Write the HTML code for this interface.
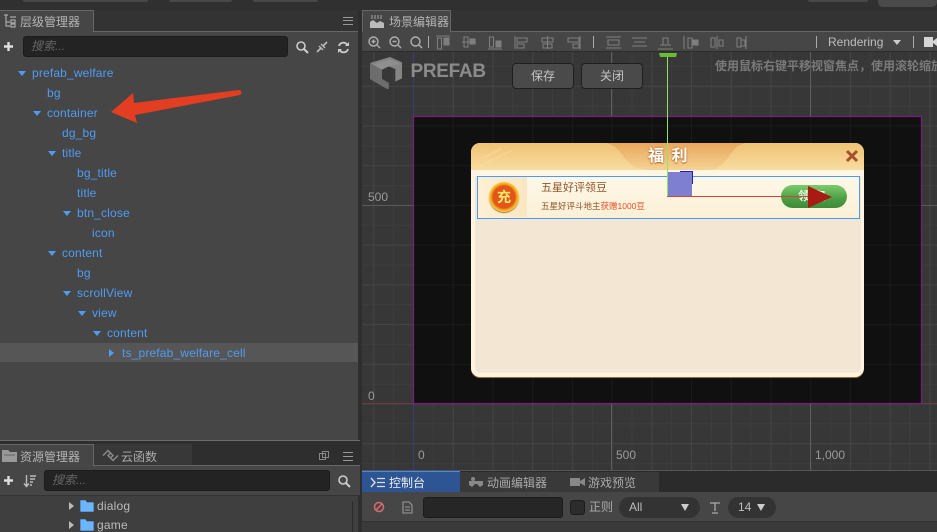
<!DOCTYPE html>
<html lang="zh"><head><meta charset="utf-8"><style>
html,body{margin:0;padding:0;width:937px;height:532px;overflow:hidden;background:#2e2e2e}
body{position:relative;font-family:"Liberation Sans","Noto Sans CJK SC",sans-serif;font-size:12px;color:#ccc}
div,span,svg{position:absolute;box-sizing:border-box}
.t{white-space:nowrap;line-height:20px;height:20px}
.r{color:#4f9cf2;white-space:nowrap;line-height:20px;height:20px;font-size:12px;letter-spacing:.16px}
.a{width:0;height:0;border-left:4px solid transparent;border-right:4px solid transparent;border-top:5px solid #4f9cf2}
.ar{width:0;height:0;border-top:4px solid transparent;border-bottom:4px solid transparent;border-left:5px solid #4f9cf2}
.s{width:1px;height:12px;top:36px;background:#aaa}
.btn{top:63px;height:26px;width:62px;background:#4a4a4a;border:1px solid #1f1f1f;border-radius:4px;color:#c4c4c4;text-align:center;line-height:24px}
.in{background:#232323;border:1px solid #1c1c1c;border-radius:3px;color:#666;font-style:italic;padding-left:7px;line-height:19px}
</style></head><body>
<!-- top bar -->
<div style="left:0;top:0;width:937px;height:10px;background:#303030"></div>
<div style="left:23px;top:0;width:125px;height:2px;background:#484848;border-radius:0 0 5px 5px"></div>
<div style="left:169px;top:0;width:63px;height:2px;background:#484848;border-radius:0 0 5px 5px"></div>
<div style="left:253px;top:0;width:65px;height:2px;background:#484848;border-radius:0 0 5px 5px"></div>
<div style="left:808px;top:0;width:60px;height:2px;background:#484848;border-radius:0 0 5px 5px"></div>
<div style="left:878px;top:0;width:59px;height:7px;background:#4a4a4a;border-radius:0 0 5px 5px"></div>

<!-- left hierarchy -->
<div style="left:0;top:10px;width:360px;height:21px;background:#333"></div>
<div style="left:0;top:10px;width:94px;height:22px;background:#464646;border:1px solid #666;border-bottom:0;border-left:0"></div>
<div style="left:94px;top:31px;width:266px;height:1px;background:#666"></div>
<div style="left:0;top:32px;width:358px;height:408px;background:#464646"></div>
<div style="left:358px;top:10px;width:4px;height:462px;background:#2e2e2e"></div>
<div style="left:0;top:440px;width:360px;height:1px;background:#6a6a6a"></div>
<svg style="left:3px;top:14px" width="14" height="14" viewBox="0 0 14 14"><path d="M1 1H5M3 1V5M7 3H13M3 5V12H7M3 8H7M8 6H12V9H8ZM8 10H12V13H8Z" fill="none" stroke="#a8a8a8" stroke-width="1.2"/></svg>
<div class="t" style="left:20px;top:12px;color:#b4b4b4">层级管理器</div>
<div style="left:343px;top:17px;width:10px;height:8px;border-top:1px solid #999;border-bottom:1px solid #999"></div>
<div style="left:343px;top:20px;width:10px;height:2px;border-top:1px solid #999"></div>
<svg style="left:3px;top:41px" width="11" height="11"><path d="M5.5 1V10M1 5.5H10" stroke="#ddd" stroke-width="2.4"/></svg>
<div class="in" style="left:23px;top:36px;width:265px;height:21px">搜索...</div>
<svg style="left:295px;top:40px" width="14" height="14"><circle cx="6" cy="6" r="4" fill="none" stroke="#ccc" stroke-width="1.6"/><path d="M9 9L13 13" stroke="#ccc" stroke-width="2"/></svg>
<svg style="left:316px;top:41px" width="12" height="12"><path d="M1 11L5 7M11 1L7 5" stroke="#bbb" stroke-width="1.6"/><path d="M3 5L7 9M5 3L9 7" stroke="#bbb" stroke-width="1.4"/></svg>
<svg style="left:337px;top:41px" width="13" height="13" viewBox="0 0 13 13"><path d="M2 5A4.5 4.5 0 0 1 10 3.5M11 8A4.5 4.5 0 0 1 3 9.5" fill="none" stroke="#ccc" stroke-width="1.8"/><path d="M12 1V5H8ZM1 12V8H5Z" fill="#ccc"/></svg>

<div style="left:0;top:343px;width:358px;height:19px;background:#565656"></div>
<div class="a" style="left:18px;top:71px"></div><div class="r" style="left:32px;top:63px">prefab_welfare</div>
<div class="r" style="left:47px;top:83px">bg</div>
<div class="a" style="left:33px;top:111px"></div><div class="r" style="left:47px;top:103px">container</div>
<div class="r" style="left:62px;top:123px">dg_bg</div>
<div class="a" style="left:48px;top:151px"></div><div class="r" style="left:62px;top:143px">title</div>
<div class="r" style="left:77px;top:163px">bg_title</div>
<div class="r" style="left:77px;top:183px">title</div>
<div class="a" style="left:63px;top:211px"></div><div class="r" style="left:77px;top:203px">btn_close</div>
<div class="r" style="left:92px;top:223px">icon</div>
<div class="a" style="left:48px;top:251px"></div><div class="r" style="left:62px;top:243px">content</div>
<div class="r" style="left:77px;top:263px">bg</div>
<div class="a" style="left:63px;top:291px"></div><div class="r" style="left:77px;top:283px">scrollView</div>
<div class="a" style="left:78px;top:311px"></div><div class="r" style="left:92px;top:303px">view</div>
<div class="a" style="left:93px;top:331px"></div><div class="r" style="left:107px;top:323px">content</div>
<div class="ar" style="left:109px;top:349px"></div><div class="r" style="left:122px;top:343px">ts_prefab_welfare_cell</div>
<svg style="left:105px;top:85px" width="140" height="42"><path d="M6 27L28 8L29 18L134 5C137 5 137 9 135 10L30 30L32 38Z" fill="#e33d22"/></svg>

<!-- assets -->
<div style="left:0;top:441px;width:360px;height:26px;background:#2e2e2e"></div>
<div style="left:93px;top:444px;width:99px;height:22px;background:#383838"></div>
<div style="left:0;top:444px;width:94px;height:23px;background:#464646;border-top:1px solid #666;border-right:1px solid #666"></div>
<div style="left:94px;top:465px;width:266px;height:1px;background:#666"></div>
<div style="left:0;top:466px;width:360px;height:29px;background:#464646"></div>
<div style="left:0;top:495px;width:358px;height:37px;background:#3f3f3f;border-top:1px solid #333"></div>
<svg style="left:2px;top:449px" width="16" height="13"><path d="M0 1H6L8 3H15V13H0Z" fill="#999"/><path d="M2 6H13" stroke="#666"/></svg>
<div class="t" style="left:20px;top:447px;color:#b4b4b4">资源管理器</div>
<svg style="left:102px;top:449px" width="17" height="13"><path d="M1 6.5L6 1.5L11 6.5L8 9.5M16 6.5L11 11.5L6 6.5L9 3.5" fill="none" stroke="#888" stroke-width="1.5"/></svg>
<div class="t" style="left:121px;top:447px;color:#aaa">云函数</div>
<div style="left:319px;top:453px;width:7px;height:7px;border:1px solid #888"></div>
<div style="left:322px;top:451px;width:7px;height:7px;border:1px solid #888"></div>
<div style="left:343px;top:452px;width:10px;height:9px;border-top:1px solid #999;border-bottom:1px solid #999"></div>
<div style="left:343px;top:456px;width:10px;height:1px;background:#999"></div>
<svg style="left:3px;top:475px" width="11" height="11"><path d="M5.5 1V10M1 5.5H10" stroke="#ddd" stroke-width="2.4"/></svg>
<svg style="left:23px;top:474px" width="14" height="14"><path d="M3.5 1V12M1 9.5L3.5 12.5L6 9.5" fill="none" stroke="#bbb" stroke-width="1.4"/><path d="M7 2H13M7 5H12M7 8H10M7 11H9" stroke="#bbb" stroke-width="1.4"/></svg>
<div class="in" style="left:44px;top:470px;width:286px;height:21px">搜索...</div>
<svg style="left:337px;top:474px" width="14" height="14"><circle cx="6" cy="6" r="4" fill="none" stroke="#ccc" stroke-width="1.6"/><path d="M9 9L13 13" stroke="#ccc" stroke-width="2"/></svg>
<div style="left:352px;top:501px;width:1px;height:31px;background:#2a2a2a"></div>
<div style="left:69px;top:502px;width:0;height:0;border-top:4px solid transparent;border-bottom:4px solid transparent;border-left:5px solid #bbb"></div>
<div style="left:69px;top:521px;width:0;height:0;border-top:4px solid transparent;border-bottom:4px solid transparent;border-left:5px solid #bbb"></div>
<svg style="left:80px;top:500px" width="14" height="12"><path d="M0 0H6L7 2H14V12H0Z" fill="#6cb6ff" stroke="#234" stroke-width=".6"/></svg>
<svg style="left:80px;top:519px" width="14" height="12"><path d="M0 0H6L7 2H14V12H0Z" fill="#6cb6ff" stroke="#234" stroke-width=".6"/></svg>
<div class="t" style="left:97px;top:496px;color:#bbb;letter-spacing:.2px">dialog</div>
<div class="t" style="left:97px;top:515px;color:#bbb;letter-spacing:.2px">game</div>

<!-- scene tabs -->
<div style="left:362px;top:10px;width:575px;height:21px;background:#333"></div>
<div style="left:362px;top:10px;width:89px;height:22px;background:#464646;border:1px solid #666;border-bottom:0"></div>
<svg style="left:370px;top:14px" width="14" height="15"><path d="M1 2H13M1 4H13" stroke="#777" stroke-dasharray="2 1" stroke-width="2"/><path d="M0 14V8L3 6L7 9L10 7L14 9V14Z" fill="#bbb"/></svg>
<div class="t" style="left:389px;top:12px;color:#b4b4b4">场景编辑器</div>
<div style="left:451px;top:31px;width:486px;height:1px;background:#666"></div>
<div style="left:362px;top:32px;width:575px;height:20px;background:#464646;border-bottom:1px solid #2c2c2c"></div>
<!-- toolbar -->
<svg style="left:362px;top:32px" width="400" height="20" fill="none" stroke="#b0b0b0" stroke-width="1.1">
<g stroke-width="1.4"><circle cx="11.5" cy="9.5" r="4.5"/><path d="M15 13L18 16M9.5 9.5H13.5M11.5 7.5V11.5"/><circle cx="32.5" cy="9.5" r="4.5"/><path d="M36 13L39 16M30.5 9.5H34.5"/><circle cx="53.5" cy="9.5" r="4.5"/><path d="M57 13L60 16"/></g>
<g stroke="#7e7e7e"><path d="M74 4H88M75.500 6H79.500V17H75.500Z"/><path d="M82 6H87V13H82Z" fill="#7e7e7e"/>
<path d="M100 10H114M102 5H106V15H102Z"/><path d="M108 7H113V12H108Z" fill="#7e7e7e"/>
<path d="M126 17H140M127.500 5H131.500V15H127.500Z"/><path d="M134 9H139V15H134Z" fill="#7e7e7e"/>
<path d="M153 4V17M155 6H165V10H155ZM155 12H162V16H155Z"/>
<path d="M185.500 4V17M180 6H191V10H180ZM181 12H190V16H181Z"/>
<path d="M218 4V17M206 6H217V10H206ZM211 12H217V16H211Z"/>
<path d="M244 5H259M246 8H257V13H246ZM244 16H259"/>
<path d="M270 6H285M272 10H283M270 14H285"/>
<path d="M296 17H311M298 13H309M301 6H306V13H301Z"/>
<path d="M322 4V17M326 6V16H330V6Z"/><path d="M331 8H336V13H331Z" fill="#7e7e7e"/>
<path d="M355 4V17M349 6H353V15H349ZM357 8H361V14H357Z"/>
<path d="M384 4V17M375 6H379V15H375ZM379 8H383V14H379Z"/></g>
</svg>
<div class="s" style="left:428px"></div><div class="s" style="left:593px"></div><div class="s" style="left:816px"></div><div class="s" style="left:913px"></div>
<div class="t" style="left:828px;top:32px;color:#bdbdbd;font-size:12px">Rendering</div>
<div style="left:893px;top:40px;width:0;height:0;border-left:4px solid transparent;border-right:4px solid transparent;border-top:5px solid #ccc"></div>
<svg style="left:924px;top:36px" width="13" height="12"><path d="M0 1H9V11H0ZM9 5L13 2V10L9 7Z" fill="#d5d5d5"/></svg>

<!-- scene -->
<svg style="left:362px;top:52px" width="575" height="418" viewBox="0 0 575 418">
<defs>
<pattern id="m" patternUnits="userSpaceOnUse" x="51" y="351.500" width="19.860" height="19.860"><rect width="1" height="19.860" fill="#3d3d3d"/><rect width="19.860" height="1" fill="#3d3d3d"/></pattern>
<pattern id="j" patternUnits="userSpaceOnUse" x="51" y="351.500" width="39.720" height="39.720"><rect width="1" height="39.720" fill="#444"/><rect width="39.720" height="1" fill="#444"/></pattern>
<pattern id="k" patternUnits="userSpaceOnUse" x="51" y="351.500" width="39.720" height="39.720"><rect width="1" height="39.720" fill="#1a1a1a"/><rect width="39.720" height="1" fill="#1a1a1a"/></pattern>
</defs>
<rect width="575" height="418" fill="#373737"/>
<rect width="575" height="418" fill="url(#m)"/>
<rect width="575" height="418" fill="url(#j)"/>
<rect x="0" y="153" width="575" height="1" fill="#5a5a5a"/>
<rect x="249" y="0" width="1" height="418" fill="#5e5e5e"/>
<rect x="448" y="0" width="1" height="418" fill="#5e5e5e"/>
<rect x="51" y="0" width="1" height="418" fill="#3c3c72"/>
<rect x="0" y="351" width="575" height="1" fill="#6e3c3c"/>
<rect x="51.500" y="64.500" width="508" height="287" fill="#101010"/>
<rect x="51.500" y="64.500" width="508" height="287" fill="url(#k)"/>
<rect x="51.500" y="64.500" width="508" height="287" fill="none" stroke="#761f80" stroke-width="1.300"/>
</svg>
<svg style="left:370px;top:57px" width="32" height="32" viewBox="0 0 96 96"><path d="M0 18L60 0L96 16V64L76 74V36L56 28L36 38V66L56 78V96L50 95L0 66Z" fill="#858585"/><path d="M0 18L36 38V66L56 78V96L50 95L0 66Z" fill="#6d6d6d"/><path d="M60 8L88 20L56 28L36 38L10 22Z" fill="#8f8f8f"/></svg>
<div class="t" style="left:410.500px;top:60px;font-weight:bold;font-size:19px;color:#8b8b8b;letter-spacing:-.3px;height:24px;line-height:24px">PREFAB</div>
<div class="btn" style="left:512px">保存</div><div class="btn" style="left:581px">关闭</div>
<div class="t" style="left:715px;top:56px;color:#7a7a7a;font-weight:bold;font-size:12px">使用鼠标右键平移视窗焦点，使用滚轮缩放</div>
<div class="t" style="left:368px;top:187px;color:#9a9a9a">500</div>
<div class="t" style="left:368px;top:386px;color:#9a9a9a">0</div>
<div class="t" style="left:418px;top:445px;color:#9a9a9a">0</div>
<div class="t" style="left:616px;top:445px;color:#9a9a9a">500</div>
<div class="t" style="left:815px;top:445px;color:#9a9a9a">1,000</div>

<!-- dialog -->
<div style="left:471px;top:143px;width:393px;height:234px;background:#fff5e2;border-radius:9px;box-shadow:0 1px 0 #a86a30"></div>
<div style="left:475px;top:176px;width:386px;height:197px;background:#f3e6d2;border-radius:0 0 6px 6px"></div>
<div style="left:471px;top:143px;width:393px;height:27px;background:linear-gradient(#f0c274,#f8dca0);border-radius:9px 9px 0 0;overflow:hidden"></div>
<svg style="left:471px;top:143px" width="393" height="27"><defs><linearGradient id="g" x1="0" y1="0" x2="0" y2="1"><stop offset="0" stop-color="#e8a75c"/><stop offset="1" stop-color="#f5d394"/></linearGradient></defs><path d="M135 0C155 4 150 27 180 27H235C260 27 255 4 275 0Z" fill="url(#g)"/><path d="M6 24L40 8M10 16L30 6" stroke="#f8dca0" stroke-width="2" opacity=".5"/></svg>
<div style="left:476px;top:170px;width:384px;height:6px;background:#fff6e4"></div>
<div class="t" style="left:648px;top:147px;color:#fff;font-weight:bold;font-size:16px;word-spacing:3px;text-shadow:0 0 2px #b9682a,0 1px 1px #b9682a">福 利</div>
<svg style="left:845px;top:149px" width="14" height="14"><path d="M2 2L12 12M12 2L2 12" stroke="#a5512b" stroke-width="3"/></svg>
<div style="left:476.500px;top:175.500px;width:383px;height:43px;background:linear-gradient(#fff8e8,#fbf0d6);border:1px solid #4a9bf5"></div>
<div style="left:478px;top:177px;width:49px;height:40px;background:linear-gradient(90deg,#fdf0d6,#f9e6c2)"></div>
<div style="left:489px;top:182px;width:30px;height:30px;border-radius:50%;background:radial-gradient(#e2561a 52%,#f3b01e 62%,#fde060 78%,#d68a10);box-shadow:0 1px 1px #9a7a50"></div>
<div style="left:496px;top:188px;width:16px;height:18px;color:#ffe96a;font-weight:bold;font-size:14px;line-height:18px;text-align:center">充</div>
<div class="t" style="left:541px;top:178px;color:#8f5228;font-size:11px">五星好评领豆</div>
<div class="t" style="left:541px;top:196px;color:#8f5228;font-size:8.500px">五星好评斗地主<span style="position:static;color:#e8502a">获赠1000豆</span></div>
<div style="left:781px;top:185px;width:66px;height:23px;border-radius:12px;background:linear-gradient(#7ccb6e,#4c9e44 60%,#3f8a39)"></div>
<div class="t" style="left:798px;top:186px;color:#eaf5e4;font-size:12px;font-weight:bold">领 取</div>
<!-- gizmo -->
<div style="left:668px;top:172px;width:24px;height:25px;background:#7f7fd2"></div>
<div style="left:680px;top:171px;width:13px;height:1px;background:#1b1be0"></div>
<div style="left:692px;top:171px;width:1px;height:13px;background:#1b1be0"></div>
<div style="left:667px;top:57px;width:1px;height:140px;background:#8be85a"></div>
<div style="left:667px;top:196px;width:142px;height:1px;background:#d8403a"></div>
<svg style="left:806px;top:185px" width="28" height="24"><path d="M2 1L26 12L2 23Z" fill="#a81a12"/></svg>
<svg style="left:658px;top:52px" width="20" height="6"><path d="M1 1H19L18 5H2Z" fill="#66bf33"/></svg>

<!-- console -->
<div style="left:362px;top:470px;width:575px;height:1px;background:#555"></div>
<div style="left:362px;top:471px;width:575px;height:21px;background:#2b2b2b"></div>
<div style="left:460px;top:472px;width:199px;height:20px;background:#393939"></div>
<div style="left:362px;top:471px;width:98px;height:21px;background:#2d5594;border-top:1px solid #4a8ae0"></div>
<svg style="left:370px;top:477px" width="15" height="11"><path d="M1 1L5 5.500L1 10" fill="none" stroke="#ddd" stroke-width="1.4"/><path d="M7 1.500H15M7 5.500H15M7 9.500H15" stroke="#ddd" stroke-width="1.300"/></svg>
<div class="t" style="left:389px;top:473px;color:#eee">控制台</div>
<svg style="left:468px;top:476px" width="16" height="12"><path d="M1 5H15V9L12 11L9 8H7L4 11L1 9Z" fill="#888"/><circle cx="5" cy="3" r="2" fill="#888"/></svg>
<div class="t" style="left:487px;top:473px;color:#aaa">动画编辑器</div>
<svg style="left:570px;top:477px" width="15" height="10"><path d="M0 1H10V9H0ZM10 4L15 1V9L10 6Z" fill="#888"/></svg>
<div class="t" style="left:588px;top:473px;color:#aaa">游戏预览</div>
<div style="left:362px;top:492px;width:575px;height:30px;background:#464646;border-bottom:1px solid #333"></div>
<div style="left:362px;top:522px;width:575px;height:10px;background:#3a3a3a"></div>
<svg style="left:373px;top:501px" width="12" height="12"><circle cx="6" cy="6" r="4.500" fill="none" stroke="#d96a6a" stroke-width="1.500"/><path d="M3 9L9 3" stroke="#d96a6a" stroke-width="1.500"/></svg>
<svg style="left:402px;top:501px" width="11" height="13"><path d="M1 1H7L10 4V12H1ZM3 6H8M3 9H8" fill="none" stroke="#999" stroke-width="1.100"/></svg>
<div style="left:423px;top:497px;width:140px;height:21px;background:#262626;border:1px solid #1c1c1c;border-radius:3px"></div>
<div style="left:570px;top:500px;width:15px;height:15px;background:#2c2c2c;border:1px solid #1c1c1c;border-radius:3px"></div>
<div class="t" style="left:589px;top:497px;color:#aaa">正则</div>
<div style="left:619px;top:497px;width:81px;height:21px;background:#333;border-radius:11px"></div>
<div class="t" style="left:629px;top:497px;color:#bbb">All</div>
<div style="left:681px;top:504px;width:0;height:0;border-left:4px solid transparent;border-right:4px solid transparent;border-top:7px solid #ccc"></div>
<svg style="left:709px;top:501px" width="12" height="13"><path d="M1 2H11M6 2V10M3 12H9" fill="none" stroke="#aaa" stroke-width="1.300"/></svg>
<div style="left:728px;top:497px;width:48px;height:21px;background:#333;border-radius:11px"></div>
<div class="t" style="left:738px;top:497px;color:#bbb">14</div>
<div style="left:757px;top:504px;width:0;height:0;border-left:4px solid transparent;border-right:4px solid transparent;border-top:7px solid #ccc"></div>
</body></html>
